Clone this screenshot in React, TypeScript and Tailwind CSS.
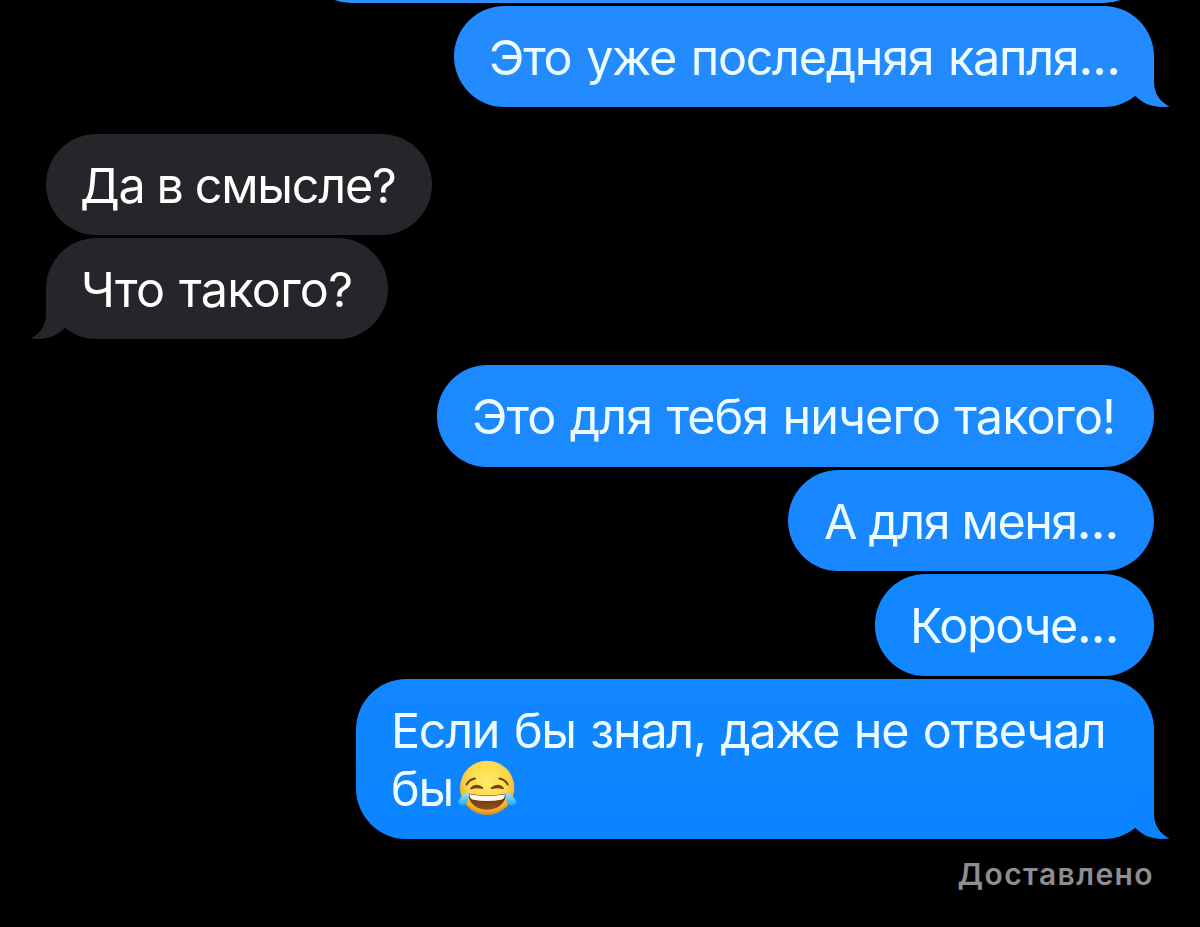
import clsx from "clsx";

type Message = {
  text: string;
  dots?: boolean;
  mine?: boolean;
  tail?: boolean;
  emoji?: boolean;
  className: string;
  textClassName?: string;
};

const MESSAGES: Message[] = [
  {
    text: "",
    mine: true,
    className: "-mt-[98px] h-[101px] w-[853px] bg-[#2f8ffb]",
  },
  {
    text: "Это уже последняя капля",
    dots: true,
    mine: true,
    tail: true,
    className: "mt-[3px] h-[101px] w-[700px] bg-[#248bff] text-[#248bff]",
    textClassName: "-ml-px tracking-[-1.3px] [word-spacing:2.4px]",
  },
  {
    text: "Да в смысле?",
    className: "mt-[26.5px] h-[101.5px] w-[386px] bg-[#26252a] text-[#26252a]",
    textClassName: "-ml-[2px] tracking-[-1.2px] [word-spacing:-0.5px]",
  },
  {
    text: "Что такого?",
    tail: true,
    className: "mt-[3px] h-[101px] w-[342px] bg-[#26252a] text-[#26252a]",
    textClassName: "-ml-px tracking-[-0.7px] [word-spacing:1.5px]",
  },
  {
    text: "Это для тебя ничего такого!",
    mine: true,
    className: "mt-[26px] h-[102px] w-[717px] bg-[#1d89ff]",
    textClassName: "-ml-px tracking-[-0.95px] [word-spacing:1.6px]",
  },
  {
    text: "А для меня",
    dots: true,
    mine: true,
    className: "mt-[3px] h-[101px] w-[366px] bg-[#1987ff]",
    textClassName: "tracking-[-1.5px] [word-spacing:0.3px]",
  },
  {
    text: "Короче",
    dots: true,
    mine: true,
    className: "mt-[3px] h-[101.5px] w-[279px] bg-[#1387ff]",
    textClassName: "-ml-px tracking-[-1.4px]",
  },
  {
    text: "Если бы знал, даже не отвечал бы",
    mine: true,
    tail: true,
    emoji: true,
    className:
      "mt-[3px] h-[160px] w-[798px] bg-linear-to-b from-[#1186ff] to-[#0c84ff] text-[#0c84ff]",
    textClassName: "-ml-px -mr-4 tracking-[-1.3px] [word-spacing:2.3px]",
  },
];

const Tail = ({ mine }: { mine?: boolean }) => (
  <svg
    viewBox="0 0 36 51"
    fill="currentColor"
    className={clsx(
      "absolute bottom-0 h-[51px] w-9",
      mine ? "-right-4" : "-left-4 -scale-x-100"
    )}
  >
    <path d="M0 0H20V26C20 37 26 46 35.5 50.4C23 52 11 50 1.5 40Z" />
  </svg>
);

const JoyEmoji = () => (
  <svg
    viewBox="50 20 190 190"
    className="-my-2 ml-[4px] inline-block size-[63px] align-[-6px]"
  >
    <defs>
      <radialGradient id="face" cx="0.5" cy="0.38" r="0.62">
        <stop offset="0" stopColor="#ffea68" />
        <stop offset="0.6" stopColor="#fdd84b" />
        <stop offset="0.85" stopColor="#f4b52f" />
        <stop offset="1" stopColor="#dc8b1e" />
      </radialGradient>
      <linearGradient id="mouth" x1="0" y1="0" x2="0" y2="1">
        <stop offset="0" stopColor="#5b2b0c" />
        <stop offset="1" stopColor="#965019" />
      </linearGradient>
      <linearGradient id="tear" x1="0" y1="0" x2="0" y2="1">
        <stop offset="0" stopColor="#a9e9fb" />
        <stop offset="1" stopColor="#28a7ed" />
      </linearGradient>
    </defs>
    <circle cx="141" cy="113" r="82" fill="url(#face)" />
    <g fill="none" stroke="#6f3d0b" strokeLinecap="round">
      <path d="M79 103Q87 88 104 85M178 85Q195 88 203 103" strokeWidth="6" />
      <path
        d="M92 115Q107 98 128 114Q108 109 92 115M154 114Q175 98 190 115Q174 109 154 114"
        strokeWidth="5"
      />
    </g>
    <path
      d="M84 130Q141 142 198 130C197 160 174 179 141 179S85 160 84 130Z"
      fill="url(#mouth)"
    />
    <path
      d="M87 132Q141 143 195 132Q194 144 186 148Q141 158 96 148Q88 144 87 132Z"
      fill="#fff8ef"
    />
    <path
      d="M87 124C73 130 54 145 54 156C55 168 73 170 80 158C86 148 85 135 87 124Z"
      fill="url(#tear)"
    />
    <path
      d="M195 124C209 130 228 145 228 156C227 168 209 170 202 158C196 148 197 135 195 124Z"
      fill="url(#tear)"
    />
  </svg>
);

const Bubble = ({
  text,
  dots,
  mine,
  tail,
  emoji,
  className,
  textClassName,
}: Message) => (
  <div
    className={clsx(
      "relative flex shrink-0 items-center rounded-[50.5px] px-9 pt-[3px]",
      mine ? "self-end" : "self-start",
      className
    )}
  >
    {tail && <Tail mine={mine} />}
    <p
      className={clsx(
        "relative text-[48.5px] leading-[58.5px]",
        mine ? "text-[#ecfcff]" : "text-white",
        !emoji && "whitespace-nowrap",
        textClassName
      )}
    >
      {text}
      {dots && <span className="font-medium tracking-[-0.8px]">...</span>}
      {emoji && <JoyEmoji />}
    </p>
  </div>
);

export default function App() {
  return (
    <main className="flex h-[927px] w-[1200px] flex-col overflow-hidden bg-black pr-[46px] pl-[46px] font-['Inter',sans-serif]">
      {MESSAGES.map((message, index) => (
        <Bubble key={index} {...message} />
      ))}
      <p className="mt-[17px] self-end text-[30px] leading-9 font-semibold tracking-[1.4px] text-[#8d8d93]">
        Доставлено
      </p>
    </main>
  );
}
